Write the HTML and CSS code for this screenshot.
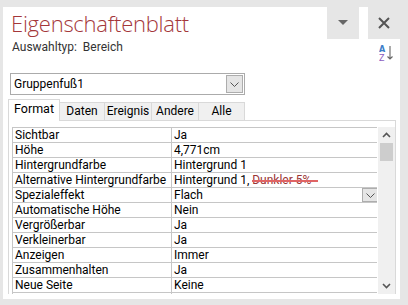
FILE: index.html
```html
<!DOCTYPE html>
<html>
<head>
<meta charset="utf-8">
<link rel="stylesheet" href="styles.css">
</head>
<body>
<div class="pane">
  <div class="header">
    <div class="title">Eigenschaftenblatt</div>
    <div class="hbtns">
      <div class="hbtn menu"><svg width="10" height="6" viewBox="0 0 10 6"><path d="M0 0H10L5 5Z" fill="#666"/></svg></div>
      <div class="hbtn close"><svg width="12" height="12" viewBox="0 0 12 12"><path d="M1 1L11 11M11 1L1 11" stroke="#555" stroke-width="2"/></svg></div>
    </div>
  </div>
  <div class="subline">
    <span class="sel">Auswahltyp:&nbsp; Bereich</span>
    <svg class="sort" width="14" height="16" viewBox="0 0 14 16">
      <text x="0" y="7" class="sa">A</text>
      <text x="0" y="15.5" class="sz">Z</text>
      <path d="M11 1V14M8.5 11.5L11 14L13.5 11.5" stroke="#666" stroke-width="1.1" fill="none"/>
    </svg>
  </div>
  <div class="combo">
    <span class="combo-text">Gruppenfuß1</span>
    <div class="combo-btn"><svg width="9" height="5" viewBox="0 0 9 5"><path d="M0.5 0.5L4.5 4.5L8.5 0.5" stroke="#555" fill="none"/></svg></div>
  </div>
  <div class="tabs">
    <div class="tab active">Format</div>
    <div class="tab">Daten</div>
    <div class="tab">Ereignis</div>
    <div class="tab">Andere</div>
    <div class="tab">Alle</div>
  </div>
  <div class="panel">
    <div class="grid-wrap">
      <table class="props">
        <tr><td class="k">Sichtbar</td><td>Ja</td></tr>
        <tr><td class="k">Höhe</td><td>4,771cm</td></tr>
        <tr><td class="k">Hintergrundfarbe</td><td>Hintergrund 1</td></tr>
        <tr><td class="k">Alternative Hintergrundfarbe</td><td>Hintergrund 1, <span class="struck">Dunkler 5%</span></td></tr>
        <tr><td class="k">Spezialeffekt</td><td><div class="vcell"><span>Flach</span><div class="cell-btn"><svg width="9" height="5" viewBox="0 0 9 5"><path d="M0.5 0.5L4.5 4.5L8.5 0.5" stroke="#555" fill="none"/></svg></div></div></td></tr>
        <tr><td class="k">Automatische Höhe</td><td>Nein</td></tr>
        <tr><td class="k">Vergrößerbar</td><td>Ja</td></tr>
        <tr><td class="k">Verkleinerbar</td><td>Ja</td></tr>
        <tr><td class="k">Anzeigen</td><td>Immer</td></tr>
        <tr><td class="k">Zusammenhalten</td><td>Ja</td></tr>
        <tr><td class="k">Neue Seite</td><td>Keine</td></tr>
        <tr><td class="k">&nbsp;</td><td>&nbsp;</td></tr>
      </table>
    </div>
    <div class="scroll">
      <div class="arrow"><svg width="9" height="6" viewBox="0 0 9 6"><path d="M1 5L4.5 1.5L8 5" stroke="#555" stroke-width="1.6" fill="none"/></svg></div>
      <div class="thumb"></div>
      <div class="track"></div>
      <div class="arrow"><svg width="9" height="6" viewBox="0 0 9 6"><path d="M1 1L4.5 4.5L8 1" stroke="#555" stroke-width="1.6" fill="none"/></svg></div>
    </div>
  </div>
</div>
</body>
</html>
```
FILE: styles.css
```css
html, body {
  margin: 0;
  padding: 0;
}
body {
  background: #e6e6e6;
  width: 408px;
  height: 305px;
  overflow: hidden;
  font-family: Roboto, "Open Sans", sans-serif;
  font-size: 12px;
  color: #000;
}
.pane {
  margin: 7px 8px 0 3px;
  width: 397px;
  height: 292px;
  background: #fff;
  display: flex;
  flex-direction: column;
}
.header {
  height: 32px;
  display: flex;
  justify-content: space-between;
}
.title {
  font-family: "Open Sans", sans-serif;
  font-weight: 300;
  font-size: 22px;
  color: #a4373a;
  padding-left: 8px;
  line-height: 30px;
  margin-top: 1px;
  letter-spacing: -0.25px;
}
.hbtns {
  display: flex;
  gap: 9px;
}
.hbtn {
  width: 32px;
  height: 32px;
  background: #e6e6e6;
  display: flex;
  align-items: center;
  justify-content: center;
}
.subline {
  height: 22px;
  display: flex;
  justify-content: space-between;
  align-items: flex-start;
  padding: 0 7px 0 9px;
}
.sel {
  color: #333;
  font-size: 12px;
  line-height: 16px;
}
.sort {
  margin-top: 6px;
}
.sa {
  font-family: "DejaVu Sans", sans-serif;
  font-size: 8px;
  fill: #3c7ec8;
  font-weight: bold;
}
.sz {
  font-family: "DejaVu Sans", sans-serif;
  font-size: 8px;
  fill: #8c5cc0;
}
.combo {
  margin: 12px 0 0 7px;
  width: 233px;
  height: 20px;
  border: 1px solid #ababab;
  display: flex;
  align-items: center;
  justify-content: space-between;
}
.combo-text {
  padding-left: 3px;
  font-size: 12px;
}
.combo-btn {
  width: 15px;
  height: 16px;
  margin-right: 1px;
  background: #e5e5e5;
  border: 1px solid #adadad;
  display: flex;
  align-items: center;
  justify-content: center;
}
.tabs {
  margin: 5px 0 0 5px;
  height: 20px;
  display: flex;
  align-items: flex-end;
}
.tab {
  height: 17px;
  background: #f0f0f0;
  border: 1px solid #d9d9d9;
  border-bottom: none;
  border-left: none;
  font-size: 12px;
  line-height: 17px;
  text-align: center;
}
.tab:nth-child(2) { width: 44px; }
.tab:nth-child(3) { width: 46px; }
.tab:nth-child(4) { width: 46px; }
.tab:nth-child(5) { width: 45px; }
.tab.active {
  width: 50px;
  background: #fff;
  border-left: 1px solid #d9d9d9;
  line-height: 18px;
  font-size: 12.5px;
  position: relative;
  z-index: 1;
  margin-bottom: -1px;
  height: 21px;
}
.panel {
  margin-left: 5px;
  width: 388px;
  border: 1px solid #d9d9d9;
  border-bottom: none;
  display: flex;
  padding: 6px 0 0 3px;
  box-sizing: border-box;
  height: 174px;
}
.grid-wrap {
  width: 367px;
  height: 167px;
  overflow: hidden;
}
.props {
  border-collapse: collapse;
  width: 367px;
  table-layout: fixed;
}
.props td {
  border: 1px solid #c6c6c6;
  height: 14px;
  padding: 0 0 0 2px;
  font-size: 12px;
  line-height: 14px;
  white-space: nowrap;
  overflow: hidden;
}
.props td.k {
  width: 156px;
}
.struck {
  color: #9a3434;
  position: relative;
}
.struck::after {
  content: "";
  position: absolute;
  left: 0;
  right: -7px;
  top: 7px;
  height: 2px;
  background: #e06464;
}
.vcell {
  display: flex;
  justify-content: space-between;
  align-items: center;
}
.cell-btn {
  width: 14px;
  height: 12px;
  background: #e5e5e5;
  border: 1px solid #adadad;
  display: flex;
  align-items: center;
  justify-content: center;
}
.scroll {
  width: 17px;
  margin-left: 1px;
  height: 167px;
  background: #f0f0f0;
  display: flex;
  flex-direction: column;
  align-items: center;
}
.arrow {
  height: 16px;
  width: 17px;
  display: flex;
  align-items: center;
  justify-content: center;
}
.thumb {
  width: 13px;
  height: 18px;
  background: #cdcdcd;
}
.track {
  flex: 1;
}
```
